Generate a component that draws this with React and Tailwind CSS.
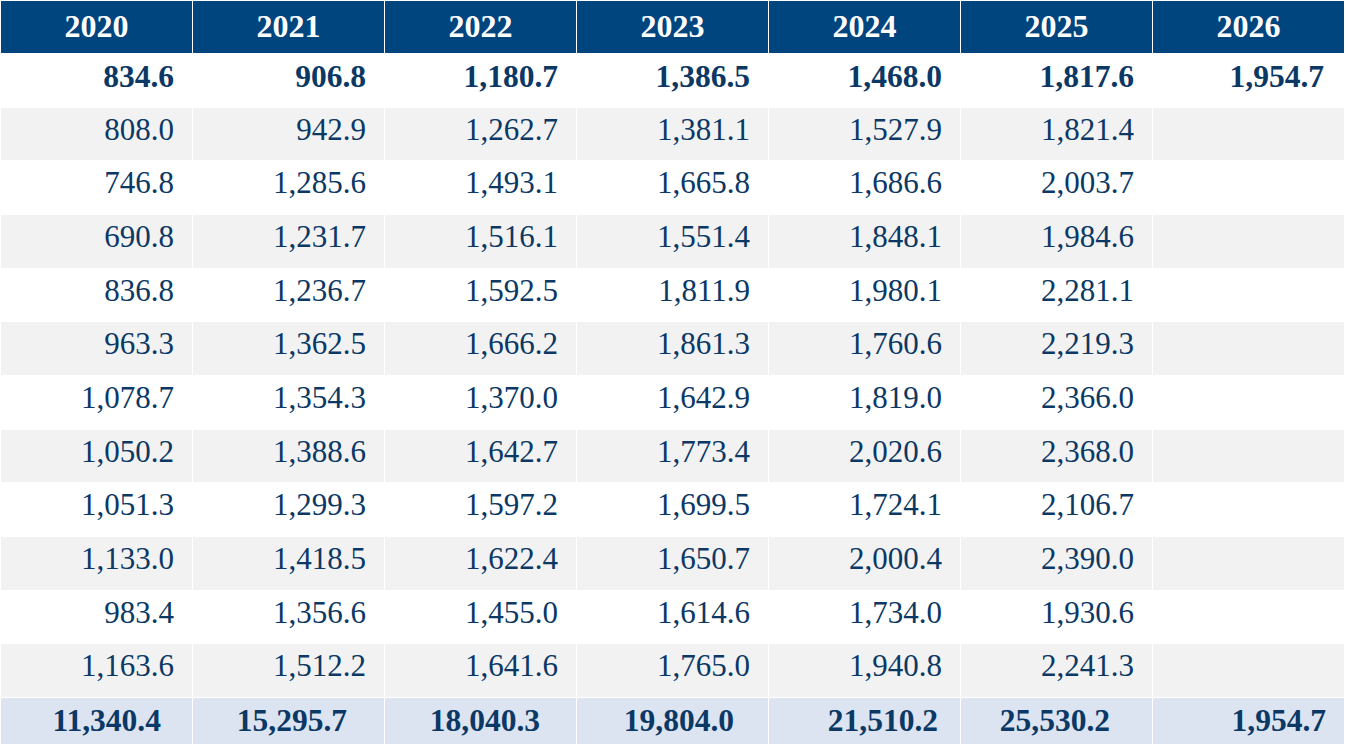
import React from 'react';

const years = ['2020', '2021', '2022', '2023', '2024', '2025', '2026'];

const firstRow = ['834.6', '906.8', '1,180.7', '1,386.5', '1,468.0', '1,817.6', '1,954.7'];

const rows = [
  ['808.0', '942.9', '1,262.7', '1,381.1', '1,527.9', '1,821.4', ''],
  ['746.8', '1,285.6', '1,493.1', '1,665.8', '1,686.6', '2,003.7', ''],
  ['690.8', '1,231.7', '1,516.1', '1,551.4', '1,848.1', '1,984.6', ''],
  ['836.8', '1,236.7', '1,592.5', '1,811.9', '1,980.1', '2,281.1', ''],
  ['963.3', '1,362.5', '1,666.2', '1,861.3', '1,760.6', '2,219.3', ''],
  ['1,078.7', '1,354.3', '1,370.0', '1,642.9', '1,819.0', '2,366.0', ''],
  ['1,050.2', '1,388.6', '1,642.7', '1,773.4', '2,020.6', '2,368.0', ''],
  ['1,051.3', '1,299.3', '1,597.2', '1,699.5', '1,724.1', '2,106.7', ''],
  ['1,133.0', '1,418.5', '1,622.4', '1,650.7', '2,000.4', '2,390.0', ''],
  ['983.4', '1,356.6', '1,455.0', '1,614.6', '1,734.0', '1,930.6', ''],
  ['1,163.6', '1,512.2', '1,641.6', '1,765.0', '1,940.8', '2,241.3', ''],
];

const totals = ['11,340.4', '15,295.7', '18,040.3', '19,804.0', '21,510.2', '25,530.2', '1,954.7'];

// totals sit a little off the right edge, each by its own amount
const totalPad = ['pr-[31px]', 'pr-[37px]', 'pr-[36px]', 'pr-[34px]', 'pr-[22px]', 'pr-[42px]', 'pr-[18px]'];

const Cell = ({ children, className }) => (
  <div className={`h-[52.67px] flex items-center justify-end pb-2 ${className}`}>
    {children}
  </div>
);

const App = () => {
  return (
    <div className="min-h-screen bg-white pt-px pl-px font-['Liberation_Serif',serif] text-[#0b3865]">
      <div className="w-[1343px] flex flex-col gap-px">
        {/* header */}
        <div className="grid grid-cols-7 gap-px">
          {years.map((y) => (
            <div key={y} className="h-[52px] bg-[#01457f] text-white font-bold text-[32px] flex items-center justify-center pb-[3px]">
              {y}
            </div>
          ))}
        </div>

        <div className="grid grid-cols-7 gap-px">
          {firstRow.map((v, i) => (
            <Cell key={i} className={`bg-white font-bold text-[31.5px] ${i === 6 ? 'pr-[20px]' : 'pr-[18px]'}`}>
              {v}
            </Cell>
          ))}
        </div>

        {rows.map((row, r) => (
          <div key={r} className="grid grid-cols-7 gap-px">
            {row.map((v, i) => (
              <Cell key={i} className={`${r % 2 === 0 ? 'bg-[#f2f2f2]' : 'bg-white'} text-[31px] pr-[18px]`}>
                {v}
              </Cell>
            ))}
          </div>
        ))}

        {/* totals */}
        <div className="grid grid-cols-7 gap-px">
          {totals.map((v, i) => (
            <Cell key={i} className={`bg-[#dce4f1] font-bold text-[31.5px] ${totalPad[i]}`}>
              {v}
            </Cell>
          ))}
        </div>
      </div>
    </div>
  );
};

export default App;
